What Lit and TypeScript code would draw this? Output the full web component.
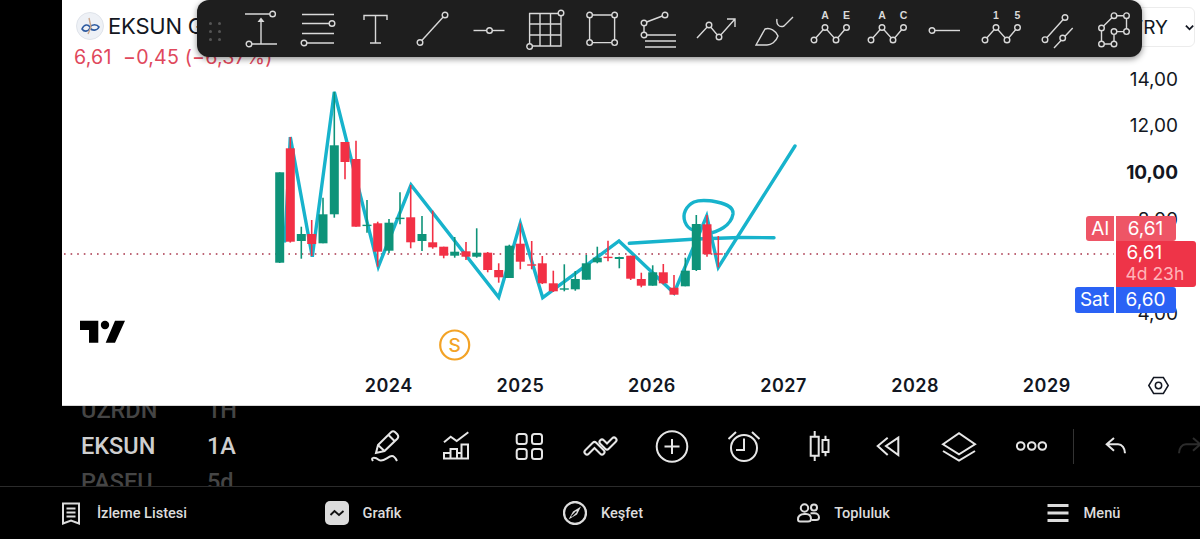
import { LitElement, html, css, svg } from "lit";
import { customElement } from "lit/decorators.js";

type C = [number, number, number, number, number, number];
// x, bodyTop, bodyBottom, wickTop, wickBottom, up(1)/down(0)
const CANDLES: C[] = [
  [279.7,172.3,262.7,172.3,263,1],[290.3,148.3,241.7,137,242.6,0],[301.3,234,241,226.7,258.7,1],[311.7,234,244,220,256,0],
  [323,214.3,243.3,197.7,243.3,1],[334.3,145.3,214.3,91.7,217.7,1],[345,142,162,142,179.3,0],[356,159,226.7,140.7,226.7,0],
  [367,224.7,225.7,200,232.7,1],[377.7,223.3,251.7,221.7,266.7,0],[389,222.7,250.7,219,253.3,1],[400,217.7,218.7,192.3,224.3,1],
  [410.7,217.3,242.3,185,248.3,0],[422,234,241,216,251,1],[432.7,242.3,247.3,210.7,248.7,0],[443.7,246.7,255.7,246.7,258.3,0],
  [454.7,251.7,255.7,237,257.7,1],[466,251.3,256.7,242,260,0],[476.7,252.7,256.7,228.3,257.7,1],[487.7,252.7,270,252,272.3,0],
  [498.7,270,277.3,263.3,282.7,0],[509.3,245.7,278,244.7,278,1],[520.3,243.7,261.7,223.3,269.3,0],[531.7,264.3,265.7,241,269.3,0],
  [542.3,263.3,283.3,256,284,0],[553.3,283.3,291.3,270.7,292,0],[564.3,288.3,289.7,264.3,291.3,1],[575.3,279,289.3,271,290.7,1],
  [586.3,263.3,279.7,255,279.7,1],[597.3,257.7,262.3,246.7,263.3,1],[608,256.7,258,240.7,261.3,0],[619.3,257,259,256.7,268.3,1],
  [630.7,255.7,278.7,255.7,280,0],[641.3,279,285.7,272.7,287.3,0],[652.7,272.3,285.7,265.3,285.7,1],[663.3,272.3,283.3,264,284.3,0],
  [674,287.7,294.7,275,294.7,0],[685.3,270.7,286.3,257.7,286.3,1],[696.3,224,270,215,271,1],[707,224.3,254.3,215,256.7,0],
  [718.3,253.3,254.3,236,267.3,0],
];

const ring = (x: number, y: number, r = 2.8) => svg`<circle class="ring" cx=${x} cy=${y} r=${r}></circle>`;

const wave = (a: string, b: string) => svg`
  <path d="M2 29L13 16.5L24 29L34.5 16.5"></path>
  ${ring(2, 29)}${ring(13, 16.5)}${ring(24, 29)}${ring(34.5, 16.5)}
  <text x="13" y="8">${a}</text><text x="34.5" y="8">${b}</text>`;

const TOOLS = [
  svg`<path d="M2 3H27M9 33H34M18 8V33"></path><path class="solid" d="M14.5 11L18 6.5L21.5 11Z"></path>${ring(29.6, 3)}${ring(6, 33)}`,
  svg`<path d="M2 3.5H34M2 12.5H30M2 22.5H34M6 32H34"></path>${ring(32, 12.5)}${ring(4, 32)}`,
  svg`<path d="M7 9V4.5H30V9M18.5 4.5V32M13 32H24"></path>`,
  svg`<path d="M6 31.5L31 4"></path>${ring(6, 31.5)}${ring(31, 4)}`,
  svg`<path d="M2.5 19.5H33.5"></path>${ring(18.5, 19.5)}`,
  svg`<path d="M2.6 2.5H34V35H2.6ZM13 2.5V35M23.5 2.5V35M2.6 13H34M2.6 24H34"></path>${ring(34, 2, 2.8)}${ring(2.6, 35.5, 2.8)}`,
  svg`<path d="M5.6 4H30.6V31.6H5.6Z"></path>${ring(5.6, 4)}${ring(30.6, 4)}${ring(5.6, 31.6)}${ring(30.6, 31.6)}`,
  svg`<path d="M3 12L24 4M3 12V24M3 24H35M4 30H35M4 36H35"></path>${ring(24, 4)}${ring(3, 12)}${ring(3, 24)}`,
  svg`<path d="M-1 27L11 14L21 26L37 8M29 8H37V16"></path>${ring(11, 14)}${ring(21, 26)}`,
  svg`<path d="M1 34L10 18C15 16 21 20 23 25C21 31 16 34 12 34ZM22 8C21 13 24 17 29 15L38 6"></path>`,
  wave("A", "E"),
  wave("A", "C"),
  svg`<path d="M6 19.5H34"></path>${ring(6, 19.5)}`,
  wave("1", "5"),
  svg`<path d="M6 28.7L26 6.5M15 37L33.7 17"></path>${ring(6, 28.7)}${ring(26, 6.5)}${ring(23.7, 27)}`,
  svg`<path d="M5.5 17L18 4.7H30.5V20.6H18V33H5.5Z"></path>${ring(18, 4.7)}${ring(30.5, 4.7)}${ring(5.5, 17)}${ring(18, 20.6)}${ring(30.5, 20.6)}${ring(5.5, 33)}${ring(18, 33)}`,
];

const BOTTOM = [
  svg`<path d="M9 24L11 16L24 3.2Q26 1.5 28 3L30.5 5.5Q32 7.5 30.5 9.5L17.5 22ZM11 16L17.5 22M21.5 6L28 12.5"></path><path d="M6 32C3 28 8 28 12 31C16 34 21 27 25 27C27 27 29 30 30 32"></path>`,
  svg`<path d="M5 13.3L11.7 7.7L17.7 12L29.3 3.3"></path><path d="M5 24H11.5V29.5H5ZM11.5 20H18V29.5H11.5ZM18 24H22.5V29.5H18ZM22.5 15.5H29V29.5H22.5Z"></path>`,
  svg`<rect x="5.7" y="5" width="10" height="10" rx="2.5"></rect><rect x="21" y="5" width="10" height="10" rx="2.5"></rect><rect x="5.7" y="20" width="10" height="10" rx="2.5"></rect><rect x="21" y="20" width="10" height="10" rx="2.5"></rect>`,
  svg`<path stroke-width="7" stroke-linecap="round" stroke-linejoin="round" d="M5 23L12.5 15.5L20 23"></path><path class="inner" d="M5 23L12.5 15.5L20 23"></path><path stroke-width="7" stroke-linecap="round" stroke-linejoin="round" d="M20 13L25 18L32 11"></path><path class="inner" d="M20 13L25 18L32 11"></path>`,
  svg`<circle cx="18" cy="17.5" r="15.3"></circle><path d="M18 10V25M10.5 17.5H25.5"></path>`,
  svg`<circle cx="18" cy="19" r="13"></circle><path d="M18 9.5V21H10M2.5 10L10 3M33.5 10L26 3"></path>`,
  svg`<path d="M12.7 7.7H20.7V26.7H12.7ZM16.7 2V7.7M16.7 26.7V32M24.5 11H30.5V23H24.5ZM27.5 6.7V11M27.5 23V27.3"></path>`,
  svg`<path d="M17.7 8.7L7.7 17L17.7 26M28.3 8.7L16 17L28.3 26Z"></path>`,
  svg`<path d="M2 15.3L18 4.3L34 15.3L18 25.3ZM2 22L18 31.7L34 22"></path>`,
  svg`<circle cx="7.7" cy="17" r="3.8"></circle><circle cx="18.7" cy="17" r="3.8"></circle><circle cx="29.3" cy="17" r="3.8"></circle>`,
];

@customElement("app-root")
export class AppRoot extends LitElement {
  static styles = css`
    :host { display: block; width: 1200px; height: 539px; background: #000; overflow: hidden; font-family: Inter, "Noto Sans", sans-serif; }
    .chart { position: relative; margin-left: 62px; height: 405px; background: #fff; border-bottom: 1px solid #d8d8d8; box-sizing: content-box; display: grid; grid-template-columns: 1052px 86px; grid-template-rows: 366px 39px; color: #131722; }
    .plot { display: block; width: 1052px; height: 366px; overflow: visible; }
    .teal { fill: none; stroke: #17b3cc; stroke-width: 3.4; stroke-linejoin: miter; stroke-linecap: round; }
    .dotted { stroke: #a8344a; stroke-width: 1.6; stroke-dasharray: 1.6 5; }
    .up { fill: #0e9379; stroke: #0e9379; }
    .down { fill: #f23045; stroke: #f23045; }
    .wick { stroke-width: 1.6; }
    .body { stroke: none; }
    .tv { fill: #000; }
    .s-ring { fill: none; stroke: #f3a326; stroke-width: 2.2; }
    .s-txt { fill: #f3a326; font-size: 19px; font-weight: 500; text-anchor: middle; font-family: Inter, sans-serif; }
    .scale { padding-top: 56.6px; padding-right: 22px; display: flex; flex-direction: column; align-items: flex-end; font-size: 19px; overflow: hidden; }
    .scale div { height: 46.8px; line-height: 46.8px; flex: none; }
    .scale .bold { font-weight: 700; }
    .times { display: flex; padding-left: 261px; align-items: center; }
    .times span { width: 131.6px; flex: none; text-align: center; font-size: 18px; font-weight: 600; letter-spacing: .5px; }
    .hex { display: flex; align-items: center; padding-left: 33px; }
    .hex svg { width: 23px; height: 23px; fill: none; stroke: #131722; stroke-width: 1.7; }

    .legend { position: absolute; left: 12px; top: 11px; }
    .name { display: flex; align-items: center; gap: 4px; font-size: 22px; line-height: 30px; color: #131722; letter-spacing: -.2px; white-space: nowrap; }
    .logo { width: 28px; height: 28px; margin-left: 2px; }
    .quote { margin-top: 4px; font-size: 19.6px; line-height: 24px; letter-spacing: .2px; color: #e0485c; white-space: pre; }
    .cur { position: absolute; left: 1068px; top: 7px; width: 65px; height: 40px; box-sizing: border-box; border: 1px solid #ececec; border-radius: 6px; display: flex; align-items: center; gap: 17px; font-size: 19px; }
    .cur svg { width: 10px; height: 7px; fill: none; stroke: #131722; stroke-width: 2; }

    .toolbar { position: absolute; left: 135px; top: 0; width: 945px; height: 57px; background: #1e1e1e; border-radius: 12px; box-shadow: 0 2px 6px rgba(0,0,0,.45); display: flex; align-items: center; padding-left: 46px; box-sizing: border-box; gap: 20.9px; }
    .grip { position: absolute; left: 12px; top: 22px; display: grid; grid-template-columns: 3px 3px; gap: 5px 6px; }
    .grip i { width: 3px; height: 3px; border-radius: 50%; background: #555; }
    .toolbar svg { width: 36px; height: 36px; flex: none; overflow: visible; fill: none; stroke: #d9d9d9; stroke-width: 1.4; }
    .ring { fill: #1e1e1e; }
    .solid { fill: #d9d9d9; stroke: none; }
    .toolbar text { fill: #d9d9d9; stroke: none; font: 700 10.5px "Liberation Sans", sans-serif; text-anchor: middle; }

    .tags { position: absolute; left: 1013px; top: 215.5px; display: grid; grid-template-columns: 39px 60px 19px; grid-template-rows: 25.5px 46px 25.5px; column-gap: 1.5px; font-size: 19px; color: #fff; text-align: center; line-height: 25.5px; }
    .side { justify-self: end; padding: 0 5px; border-radius: 3px 0 0 3px; }
    .val { border-radius: 0 3px 3px 0; }
    .al { background: #ee5566; }
    .sat { background: #2a62f5; }
    .now { grid-column: 2 / 4; grid-row: 2; background: #ee3448; border-radius: 0 3px 3px 0; line-height: 21px; padding-top: 1px; box-sizing: border-box; text-align: left; padding-left: 11px; }
    .now small { display: block; font-size: 17.5px; color: #ffb3b8; margin-left: -1px; }

    .dock { height: 80px; display: flex; overflow: hidden; }
    .syms { width: 367px; flex: none; box-sizing: border-box; padding-left: 81px; display: flex; flex-direction: column; justify-content: center; font-family: Roboto, sans-serif; font-weight: 500; font-size: 23.5px; color: #454545; }
    .syms div { display: flex; height: 36px; line-height: 36px; flex: none; }
    .syms b { width: 126px; font-weight: 500; }
    .syms .on { color: #cfcfcf; }
    .tools { display: flex; gap: 35.8px; align-items: center; padding-top: 2px; }
    .tools svg, .hist svg { width: 36px; height: 36px; flex: none; fill: none; stroke: #e6e6e6; stroke-width: 2; }
    .inner { stroke: #000 !important; stroke-width: 3; stroke-linecap: round; stroke-linejoin: round; }
    .sep { width: 1px; height: 35px; background: #333; margin: 0 24px; align-self: center; flex: none; }
    .hist { display: flex; gap: 36px; align-items: center; padding-top: 2px; }
    .hist .off { stroke: #2c2c2c; overflow: visible; }

    nav { height: 53px; border-top: 1px solid #2b2b2b; display: grid; grid-template-columns: repeat(5, 240px); padding-left: 3px; box-sizing: border-box; font-family: Roboto, sans-serif; font-weight: 500; font-size: 14.6px; color: #dcdcdc; }
    .item { display: flex; align-items: center; justify-content: center; gap: 14px; }
    .item svg { width: 24px; height: 24px; flex: none; fill: none; stroke: #dcdcdc; stroke-width: 2; }
  `;

  private chartSvg() {
    return html`<svg class="plot" viewBox="62 0 1052 366">
      <path class="dotted" d="M64 254H1114"></path>
      <path class="teal" d="M285 241L290.3 137L312.3 256.7L334.3 92L378.3 266.7L411 185L498.7 297.3L520.3 223.3L542.7 297.7L619 241L674 293L706.7 216L718.3 267.3L795 146"></path>
      <path class="teal" d="M629.3 243.3L696.7 239L740 237.5L774 237.7"></path>
      <path class="teal" d="M706 234C718 232 731 226 733 214C734 206 724 203 712 201C706 200.5 700 199.5 694 202C686 206 682 214 685 222C687 227 690 229 693 230"></path>
      ${CANDLES.map(([x, t, b, wt, wb, up]) => svg`<g class=${up ? "up" : "down"}>
        <line class="wick" x1=${x} x2=${x} y1=${wt} y2=${wb}></line>
        <rect class="body" x=${x - 4.5} y=${t} width="9" height=${Math.max(b - t, 1.4)}></rect>
      </g>`)}
      <path class="tv" d="M80 320.7H98.3V342.7H89V330H80ZM115 320.7H125L115 342.7H105.7Z"></path>
      <circle class="tv" cx="105" cy="325" r="4.2"></circle>
      <circle class="s-ring" cx="454.7" cy="345" r="14.5"></circle>
      <text class="s-txt" x="454.7" y="352">S</text>
    </svg>`;
  }

  render() {
    return html`
      <section class="chart">
        ${this.chartSvg()}
        <div class="scale">
          <div>14,00</div><div>12,00</div><div class="bold">10,00</div><div>8,00</div><div></div><div>4,00</div>
        </div>
        <div class="times">
          ${["2024", "2025", "2026", "2027", "2028", "2029"].map((y) => html`<span>${y}</span>`)}
        </div>
        <div class="hex">
          <svg viewBox="0 0 26 26"><path d="M7.5 4H18.5L24 13L18.5 22H7.5L2 13Z"></path><circle cx="13" cy="13" r="3.6"></circle></svg>
        </div>

        <div class="legend">
          <div class="name">
            <svg class="logo" viewBox="0 0 28 28">
              <circle cx="14" cy="14" r="13.5" fill="#eef1f6" stroke="#dfe3ea"></circle>
              <path d="M6 17C8 12 12 12 14 15C16 12 21 12 23 15C21 19 16 19 14 16C12 20 8 20 6 17Z" fill="none" stroke="#2d5aa0" stroke-width="1.6"></path>
              <path d="M13 6L15 15L12 22" fill="none" stroke="#c9a58a" stroke-width="1.4"></path>
            </svg>
            <span>EKSUN GIDA</span>
          </div>
          <div class="quote">6,61  −0,45 (−6,37%)</div>
        </div>

        <div class="cur">
          <span>TRY</span>
          <svg viewBox="0 0 10 7"><path d="M1 1.5L5 5.5L9 1.5"></path></svg>
        </div>

        <div class="toolbar">
          <div class="grip"><i></i><i></i><i></i><i></i><i></i><i></i></div>
          ${TOOLS.map((t) => html`<svg viewBox="0 0 36 36">${t}</svg>`)}
        </div>

        <div class="tags">
          <div class="side al">Al</div><div class="val al">6,61</div><div></div>
          <div></div><div class="now">6,61<small>4d 23h</small></div>
          <div class="side sat">Sat</div><div class="val sat">6,60</div><div></div>
        </div>
      </section>

      <section class="dock">
        <div class="syms">
          <div><b>UZRDN</b><span>1H</span></div>
          <div class="on"><b>EKSUN</b><span>1A</span></div>
          <div><b>PASEU</b><span>5d</span></div>
        </div>
        <div class="tools">
          ${BOTTOM.map((t) => html`<svg viewBox="0 0 36 36">${t}</svg>`)}
        </div>
        <div class="sep"></div>
        <div class="hist">
          <svg viewBox="0 0 36 36"><path d="M16 9L8.7 15.3L16 21.7M8.7 15.3H20C24 15.3 27 19 27 24.3"></path></svg>
          <svg class="off" viewBox="0 0 36 36"><path d="M9 24.3C9 19 12 15.3 16 15.3H30M23 9L30.3 15.3L23 21.7"></path></svg>
        </div>
      </section>

      <nav>
        <div class="item"><svg viewBox="0 0 24 24"><path d="M4 2.5H20V22.5L12 19.5L4 22.5ZM7.5 7.5H16.5M7.5 11.5H16.5M7.5 15.5H16.5"></path></svg><span>İzleme Listesi</span></div>
        <div class="item"><svg viewBox="0 0 24 24"><rect x="0" y="0" width="24" height="24" rx="5" fill="#dcdcdc" stroke="none"></rect><path d="M5.5 14L9.5 10L14 14L18.5 10" stroke="#111" stroke-width="1.8"></path></svg><span>Grafik</span></div>
        <div class="item"><svg viewBox="0 0 24 24"><circle cx="12" cy="12" r="11" stroke-width="2.3"></circle><path d="M5.5 18.5L10 10.5L18 5.5L14 13.5Z" fill="#dcdcdc" stroke="none"></path><path d="M8.5 15.5L13.5 10.5" stroke="#000" stroke-width="1.2"></path></svg><span>Keşfet</span></div>
        <div class="item"><svg viewBox="0 0 24 24"><circle cx="8.5" cy="7" r="3.7"></circle><circle cx="18" cy="6.5" r="3"></circle><path d="M2 18.5C2 14.5 5 13 8.5 13H10C13 13 15 15 15 18C15 19.5 14 20.5 12 20.5H4C3 20.5 2 20 2 18.5Z"></path><path d="M14.5 12.3H18.5C21 12.3 23 14 23 16.5C23 18 22 19 20 19H15.5"></path></svg><span>Topluluk</span></div>
        <div class="item"><svg viewBox="0 0 24 24"><path stroke-width="3" d="M1.5 4.5H22.5M1.5 12H22.5M1.5 19.5H22.5"></path></svg><span>Menü</span></div>
      </nav>
    `;
  }
}
